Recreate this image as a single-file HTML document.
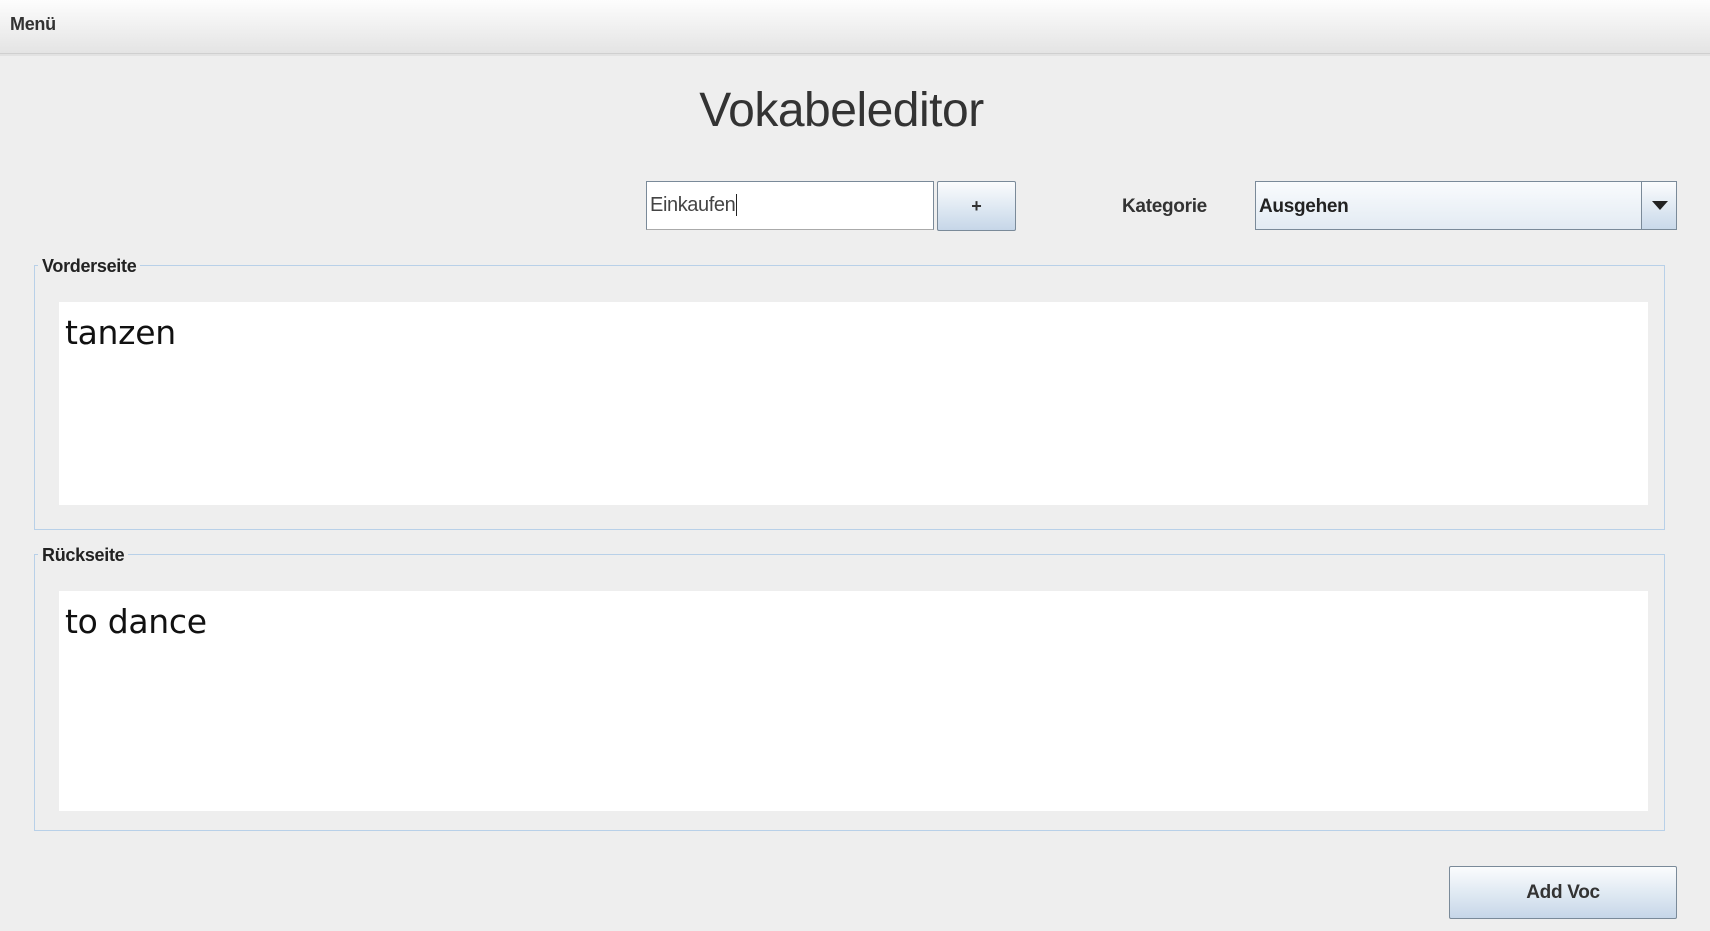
<!DOCTYPE html>
<html><head><meta charset="utf-8"><style>
*{margin:0;padding:0;box-sizing:border-box}
body{width:1710px;height:931px;background:#eeeeee;font-family:"Liberation Sans",Arial,sans-serif;position:relative;overflow:hidden}
.a{position:absolute}
.menubar{left:0;top:0;width:1710px;height:54px;background:linear-gradient(#fdfdfd,#e4e4e4);border-bottom:1px solid #cfcfcf;box-shadow:0 2px 0 #e2e2e2}
.b{font-weight:bold;color:#333;font-size:19px}
.btn{background:linear-gradient(#fbfcfd,#dbe6f1 60%,#c6d6e8);border:1px solid #7a8a99;border-radius:2px;display:flex;align-items:center;justify-content:center;font-weight:bold;color:#333}
.grp{border:1px solid #b8d0e8}
.lg{background:#eeeeee;padding:0 4px;font-weight:bold;font-size:18px;color:#222;letter-spacing:-0.3px}
.ta{background:#fff;font-family:"DejaVu Sans",sans-serif;font-size:33px;color:#111;padding:11px 6px;letter-spacing:-0.3px}
</style></head><body>
<div class="a menubar"></div>
<div class="a b" style="left:10px;top:14px;font-size:18px;letter-spacing:-0.3px">Menü</div>
<div class="a" style="left:0;width:1683px;top:83px;text-align:center;font-size:48px;color:#333;letter-spacing:-0.5px">Vokabeleditor</div>
<div class="a" style="left:646px;top:181px;width:288px;height:49px;background:#fff;border:1px solid #7a8a99;border-bottom-color:#aaa;font-size:20px;color:#444;padding:12px 3px;letter-spacing:-0.4px">Einkaufen<span style="border-left:1.5px solid #222;margin-left:1px"></span></div>
<div class="a btn" style="left:937px;top:181px;width:79px;height:50px;font-size:18px">+</div>
<div class="a b" style="left:1122px;top:196px;font-size:19px;letter-spacing:-0.3px">Kategorie</div>
<div class="a" style="left:1255px;top:181px;width:422px;height:49px;border:1px solid #7a8a99;background:linear-gradient(#f9fbfd,#e3ebf3)">
 <div class="a b" style="left:3px;top:14px;font-size:19px;color:#222;letter-spacing:-0.3px">Ausgehen</div>
 <div class="a" style="right:0;top:0;width:35px;height:47px;border-left:1px solid #7a8a99;background:linear-gradient(#fbfcfd,#c9d9ea)"><div class="a" style="left:10px;top:19px;border-left:8px solid transparent;border-right:8px solid transparent;border-top:9px solid #222"></div></div>
</div>
<div class="a grp" style="left:34px;top:265px;width:1631px;height:265px"></div>
<div class="a lg" style="left:38px;top:256px">Vorderseite</div>
<div class="a ta" style="left:59px;top:302px;width:1589px;height:203px">tanzen</div>
<div class="a grp" style="left:34px;top:554px;width:1631px;height:277px"></div>
<div class="a lg" style="left:38px;top:545px">Rückseite</div>
<div class="a ta" style="left:59px;top:591px;width:1589px;height:220px">to dance</div>
<div class="a btn" style="left:1449px;top:866px;width:228px;height:53px;font-size:19px;letter-spacing:-0.3px">Add Voc</div>
</body></html>
